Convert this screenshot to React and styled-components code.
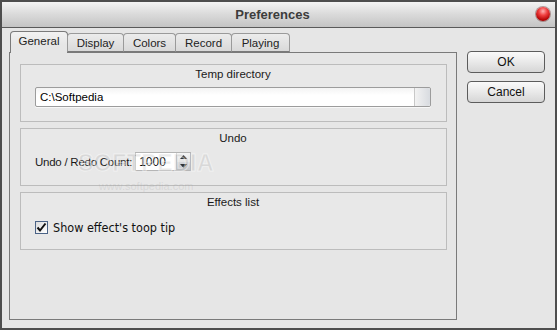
import React from "react";
import styled, { createGlobalStyle } from "styled-components";

const Global = createGlobalStyle`
  html, body { margin: 0; padding: 0; background: #e6e6e6; }
  body { font-family: "Liberation Sans", Arial, sans-serif; font-size: 11.5px; color: #1a1a1a; }
  * { box-sizing: border-box; }
`;

const Window = styled.div`
  position: relative;
  width: 557px;
  height: 330px;
  border: 2px solid #4e4e4e;
  background: #e6e6e6;
  display: flex;
  flex-direction: column;
  overflow: hidden;
`;

const TitleBar = styled.div`
  position: relative;
  height: 26px;
  flex: none;
  border-bottom: 1px solid #5a5a5a;
  background: linear-gradient(#f4f4f4, #dcdcdc 45%, #c4c4c4);
  display: flex;
  align-items: center;
  justify-content: center;
  font-weight: bold;
  font-size: 13px;
  color: #3c3c3c;
  padding-right: 12px;
`;

const CloseDot = styled.span`
  position: absolute;
  right: 5px;
  top: 5px;
  width: 14px;
  height: 14px;
  border-radius: 50%;
  background: radial-gradient(circle at 50% 30%, #ffb0b0 0, #f04040 35%, #b00000 75%, #700000 100%);
  box-shadow: 0 0 0 1px rgba(80, 0, 0, 0.35);
`;

const Body = styled.div`
  flex: 1;
  display: flex;
  padding: 4px 0 0 7px;
`;

const Left = styled.div`
  width: 448px;
  display: flex;
  flex-direction: column;
`;

const TabRow = styled.div`
  display: flex;
  align-items: flex-end;
  height: 20px;
  padding-left: 1px;
  position: relative;
  z-index: 1;
`;

const Tab = styled.div`
  width: ${(p) => p.$w}px;
  height: ${(p) => (p.$active ? 22 : 19)}px;
  margin-bottom: ${(p) => (p.$active ? -1 : 0)}px;
  margin-left: ${(p) => (p.$first ? 0 : -1)}px;
  border: 1px solid ${(p) => (p.$active ? "#7a7a7a" : "#9a9a9a")};
  border-bottom: ${(p) => (p.$active ? "none" : "1px solid #7a7a7a")};
  border-radius: 4px 4px 0 0;
  background: ${(p) =>
    p.$active ? "linear-gradient(#f2f2f2, #e6e6e6 60%)" : "linear-gradient(#ececec, #d9d9d9)"};
  display: flex;
  justify-content: center;
  padding-top: 3px;
  color: #222;
`;

const Panel = styled.div`
  height: 268px;
  border: 1px solid #7a7a7a;
  background: #e6e6e6;
  padding: 11px 9px 0 10px;
  display: flex;
  flex-direction: column;
  gap: 6px;
`;

const Group = styled.div`
  height: 58px;
  border: 1px solid #bcbcbc;
  background: #e8e8e8;
  padding: 3px 15px 0 14px;
  display: flex;
  flex-direction: column;
`;

const GroupTitle = styled.div`
  text-align: center;
  height: ${(p) => p.$h || 17}px;
  color: #1a1a1a;
`;

const PathField = styled.div`
  height: 20px;
  display: flex;
  border: 1px solid #9c9c9c;
  border-radius: 2px;
  background: linear-gradient(#f4f4f4, #ffffff 40%);
  box-shadow: 0 1px 0 #f8f8f8;
`;

const PathText = styled.div`
  flex: 1;
  padding: 3px 0 0 4px;
  color: #000;
`;

const PathButton = styled.div`
  width: 16px;
  border-left: 1px solid #c8c8c8;
  background: linear-gradient(90deg, #f2f2f2, #d8dbe0);
  border-radius: 0 2px 2px 0;
`;

const Row = styled.div`
  display: flex;
  align-items: center;
  gap: ${(p) => p.$gap || 8}px;
`;

const Label = styled.span`
  letter-spacing: -0.25px;
`;

const Spin = styled.div`
  width: 56px;
  height: 19px;
  display: flex;
  border: 1px solid #b5b5b5;
  background: #fff;
`;

const SpinText = styled.div`
  flex: 1;
  padding: 2px 0 0 3px;
  color: #000;
  font-size: 12px;
`;

const SpinArrows = styled.div`
  width: 14px;
  display: flex;
  flex-direction: column;
  border-left: 1px solid #c9c9c9;
`;

const SpinArrow = styled.div`
  flex: 1;
  display: flex;
  align-items: center;
  justify-content: center;
  background: ${(p) => (p.$down ? "linear-gradient(#d4d6da, #c4c6ca)" : "linear-gradient(#f4f4f4, #e2e2e2)")};
`;

const Check = styled.div`
  width: 13px;
  height: 13px;
  border: 1px solid #4b6386;
  background: linear-gradient(135deg, #dcdcdc, #ffffff);
  display: flex;
  align-items: center;
  justify-content: center;
`;

const CheckLabel = styled.span`
  font-family: "DejaVu Sans Condensed", "DejaVu Sans", sans-serif;
  font-size: 12.5px;
  color: #111;
`;

const Right = styled.div`
  display: flex;
  flex-direction: column;
  gap: 8px;
  margin-left: 10px;
  padding-top: 19px;
`;

const Button = styled.div`
  width: 78px;
  height: 22px;
  border: 1px solid #5c5c5c;
  border-radius: 4px;
  background: linear-gradient(#fafafa, #e9e9e9 50%, #d6d6d6);
  display: flex;
  align-items: center;
  justify-content: center;
  color: #111;
  font-size: 12px;
`;

const Watermark = styled.div`
  position: absolute;
  left: 76px;
  top: 148px;
  pointer-events: none;
  color: rgba(160, 160, 160, 0.22);
  text-align: center;
`;

const WmBig = styled.div`
  font-size: 23px;
  font-weight: bold;
  letter-spacing: 0.5px;
  -webkit-text-stroke: 1px rgba(255, 255, 255, 0.5);
`;

const WmSmall = styled.div`
  font-size: 11px;
  margin-top: 3px;
`;

const tabs = [
  { label: "General", w: 58 },
  { label: "Display", w: 57 },
  { label: "Colors", w: 53 },
  { label: "Record", w: 57 },
  { label: "Playing", w: 59 },
];

export default function App() {
  return (
    <>
      <Global />
      <Window>
        <TitleBar>
          Preferences
          <CloseDot />
        </TitleBar>
        <Body>
          <Left>
            <TabRow>
              {tabs.map((t, i) => (
                <Tab key={t.label} $w={t.w} $active={i === 0} $first={i === 0}>
                  {t.label}
                </Tab>
              ))}
            </TabRow>
            <Panel>
              <Group>
                <GroupTitle $h={19}>Temp directory</GroupTitle>
                <PathField>
                  <PathText>C:\Softpedia</PathText>
                  <PathButton />
                </PathField>
              </Group>
              <Group>
                <GroupTitle $h={20}>Undo</GroupTitle>
                <Row $gap={3}>
                  <Label>Undo / Redo Count:</Label>
                  <Spin>
                    <SpinText>1000</SpinText>
                    <SpinArrows>
                      <SpinArrow>
                        <svg width="7" height="4" viewBox="0 0 7 4">
                          <path d="M0 4 L3.5 0 L7 4 Z" fill="#333" />
                        </svg>
                      </SpinArrow>
                      <SpinArrow $down>
                        <svg width="7" height="4" viewBox="0 0 7 4">
                          <path d="M0 0 L3.5 4 L7 0 Z" fill="#333" />
                        </svg>
                      </SpinArrow>
                    </SpinArrows>
                  </Spin>
                </Row>
              </Group>
              <Group>
                <GroupTitle $h={24}>Effects list</GroupTitle>
                <Row $gap={5}>
                  <Check>
                    <svg width="11" height="11" viewBox="0 0 11 11">
                      <path d="M1.5 5.5 L4 8.5 L9.5 1.5" stroke="#111" strokeWidth="2" fill="none" />
                    </svg>
                  </Check>
                  <CheckLabel>Show effect's toop tip</CheckLabel>
                </Row>
              </Group>
            </Panel>
          </Left>
          <Right>
            <Button>OK</Button>
            <Button>Cancel</Button>
          </Right>
        </Body>
        <Watermark>
          <WmBig>SOFTPEDIA</WmBig>
          <WmSmall>www.softpedia.com</WmSmall>
        </Watermark>
      </Window>
    </>
  );
}
